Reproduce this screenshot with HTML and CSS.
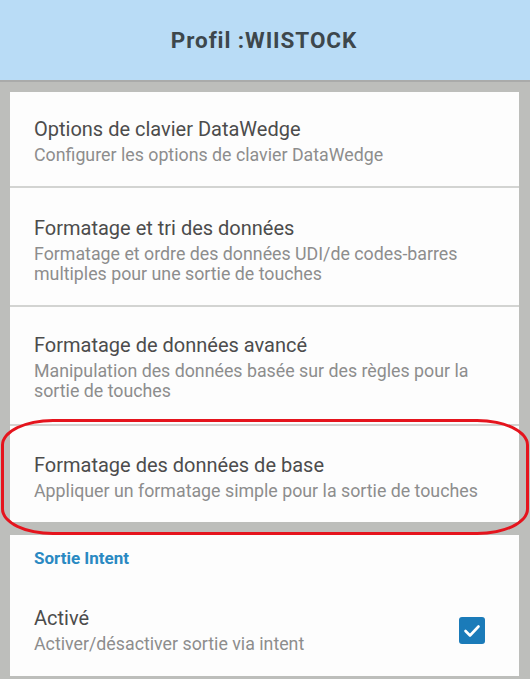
FILE: index.html
```html
<!DOCTYPE html>
<html lang="fr">
<head>
<meta charset="utf-8">
<title>Profil :WIISTOCK</title>
<link rel="stylesheet" href="styles.css">
</head>
<body>
<header class="appbar">
  <h1 class="appbar__title">Profil :WIISTOCK</h1>
</header>
<main class="content">
  <section class="card">
    <div class="pref">
      <div class="pref__title">Options de clavier DataWedge</div>
      <div class="pref__summary">Configurer les options de clavier DataWedge</div>
    </div>
    <div class="divider"></div>
    <div class="pref pref--tall">
      <div class="pref__title">Formatage et tri des données</div>
      <div class="pref__summary">Formatage et ordre des données UDI/de codes-barres multiples pour une sortie de touches</div>
    </div>
    <div class="divider"></div>
    <div class="pref pref--tall pref--tall-b">
      <div class="pref__title">Formatage de données avancé</div>
      <div class="pref__summary">Manipulation des données basée sur des règles pour la sortie de touches</div>
    </div>
    <div class="divider"></div>
    <div class="pref pref--last">
      <div class="pref__title">Formatage des données de base</div>
      <div class="pref__summary">Appliquer un formatage simple pour la sortie de touches</div>
      <div class="highlight"></div>
    </div>
  </section>
  <section class="card card--second">
    <div class="category">Sortie Intent</div>
    <div class="pref pref--switch">
      <div class="pref__text">
        <div class="pref__title">Activé</div>
        <div class="pref__summary">Activer/désactiver sortie via intent</div>
      </div>
      <div class="checkbox">
        <svg width="26" height="27" viewBox="0 0 26 27" aria-hidden="true">
          <path d="M6.5 14 L11 18.5 L19.5 9.5" fill="none" stroke="#ffffff" stroke-width="2.6" stroke-linecap="round" stroke-linejoin="round"/>
        </svg>
      </div>
    </div>
  </section>
</main>
</body>
</html>
```

FILE: styles.css
```css
* {
  box-sizing: border-box;
}

html, body {
  margin: 0;
  padding: 0;
}

body {
  width: 530px;
  height: 679px;
  overflow: hidden;
  background: #bdbebb;
  font-family: Roboto, "Noto Sans", "Liberation Sans", sans-serif;
}

.appbar {
  height: 80px;
  background: #b9dcf6;
  display: flex;
  align-items: center;
  justify-content: center;
  box-shadow: 0 2px 0 #aaabaa;
  position: relative;
}

.appbar__title {
  margin: 0 0 0 -2px;
  font-size: 22.5px;
  font-weight: 700;
  color: #3d474c;
  letter-spacing: 0.9px;
}

.content {
  padding: 12px 11px 0 10px;
  display: flex;
  flex-direction: column;
  gap: 13px;
}

.card {
  background: #fdfdfd;
  position: relative;
}

.pref {
  padding: 25px 24px 21px 24px;
  display: flex;
  flex-direction: column;
  gap: 4px;
  position: relative;
}

.pref--tall {
  padding-top: 28px;
  padding-bottom: 21px;
}

.pref--tall-b {
  padding-top: 26px;
  padding-bottom: 23px;
}

.pref--last {
  padding-top: 27px;
  padding-bottom: 21px;
}

.pref__title {
  font-size: 20px;
  line-height: 24px;
  color: #4c4c4c;
}

.pref__summary {
  font-size: 17.8px;
  line-height: 20px;
  color: #8d8d8d;
}

.divider {
  height: 2px;
  background: #d3d4d2;
}

.highlight {
  position: absolute;
  left: -9px;
  right: -10px;
  top: -7px;
  bottom: -13px;
  border: 3.5px solid #e5141d;
  border-radius: 52px / 26px;
  pointer-events: none;
}

.card--second {
  padding-top: 13px;
}

.category {
  padding: 0 24px;
  font-size: 17px;
  line-height: 20px;
  font-weight: 700;
  color: #2a89c2;
}

.pref--switch {
  flex-direction: row;
  align-items: center;
  justify-content: space-between;
  padding: 38px 34px 22px 24px;
}

.pref__text {
  display: flex;
  flex-direction: column;
  gap: 4px;
}

.checkbox {
  width: 26px;
  height: 27px;
  border-radius: 3px;
  background: #1b7bb9;
  display: flex;
}
```
